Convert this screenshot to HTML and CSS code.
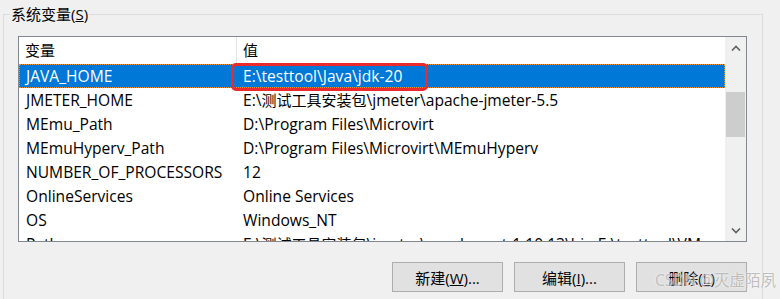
FILE: index.html
```html
<!DOCTYPE html>
<html lang="zh-CN">
<head>
  <meta charset="UTF-8">
  <title>系统变量</title>
  <link rel="stylesheet" href="styles.css">
</head>
<body>
  <fieldset class="group">
    <legend class="group-title">系统变量(<u>S</u>)</legend>
    <div class="group-body">
      <div class="listbox">
        <div class="list">
          <div class="row list-head">
            <div class="cell name">变量</div>
            <div class="cell value">值</div>
          </div>
          <div class="row selected">
            <div class="cell name">JAVA_HOME</div>
            <div class="cell value"><span class="mark"></span>E:\testtool\Java\jdk-20</div>
          </div>
          <div class="row">
            <div class="cell name">JMETER_HOME</div>
            <div class="cell value">E:\<span class="zh">测试工具安装包</span>\jmeter\apache-jmeter-5.5</div>
          </div>
          <div class="row">
            <div class="cell name">MEmu_Path</div>
            <div class="cell value">D:\Program Files\Microvirt</div>
          </div>
          <div class="row">
            <div class="cell name">MEmuHyperv_Path</div>
            <div class="cell value">D:\Program Files\Microvirt\MEmuHyperv</div>
          </div>
          <div class="row">
            <div class="cell name">NUMBER_OF_PROCESSORS</div>
            <div class="cell value">12</div>
          </div>
          <div class="row">
            <div class="cell name">OnlineServices</div>
            <div class="cell value">Online Services</div>
          </div>
          <div class="row">
            <div class="cell name">OS</div>
            <div class="cell value">Windows_NT</div>
          </div>
          <div class="row">
            <div class="cell name">Path</div>
            <div class="cell value">E:\<span class="zh">测试工具安装包</span>\jmeter\apache-ant-1.10.13\bin;E:\testtool\VMware</div>
          </div>
        </div>
        <div class="scrollbar">
          <div class="arrow">
            <svg width="10" height="6" viewBox="0 0 10 6"><path d="M1 5.5 L5 1.5 L9 5.5" fill="none" stroke="#606060" stroke-width="1.6"/></svg>
          </div>
          <div class="track"><div class="thumb"></div></div>
          <div class="arrow">
            <svg width="10" height="6" viewBox="0 0 10 6"><path d="M1 0.5 L5 4.5 L9 0.5" fill="none" stroke="#606060" stroke-width="1.6"/></svg>
          </div>
        </div>
      </div>

      <div class="buttons">
        <button class="btn">新建(<u>W</u>)...</button>
        <button class="btn">编辑(<u>I</u>)...</button>
        <button class="btn">删除(<u>L</u>)</button>
      </div>
    </div>
  </fieldset>
  <div class="watermark">CSDN @灭虚陌夙</div>
</body>
</html>
```

FILE: styles.css
```css
/* 系统变量面板 */
body {
  margin: 0;
  background-color: #f0f0f0;
  font-family: 'Open Sans', 'Noto Sans CJK SC', sans-serif;
  font-size: 15px;
  color: #000;
  overflow: hidden;
  position: relative;
  height: 299px;
}

.group {
  box-sizing: border-box;
  width: 760px;
  margin: 4px 0 0 3px;
  padding: 0;
  border: 1px solid #dcdcdc;
  min-width: 0;
}

.group-title {
  margin-left: 6px;
  padding: 0 1px;
  line-height: 20px;
}

.group-body {
  padding: 12px 15px 30px 14px;
}

.listbox {
  display: flex;
  height: 206px;
  box-sizing: border-box;
  border: 1px solid #828790;
  background-color: #fff;
}

.list {
  flex: 1;
  overflow: hidden;
  min-width: 0;
}

.row {
  display: grid;
  grid-template-columns: 218px 1fr;
  height: 24px;
  line-height: 24px;
  font-size: 15.6px;
  white-space: nowrap;
}

.zh {
  font-size: 15px;
}

.cell {
  overflow: hidden;
}

.cell.name {
  padding-left: 7px;
}

.cell.value {
  padding-left: 6px;
  position: relative;
  overflow: visible;
}

.list-head {
  height: 27px;
  line-height: 26px;
  font-size: 15px;
}

.list-head .cell.name {
  padding-left: 6px;
  border-right: 1px solid #e5e5e5;
}

.selected {
  background-color: #0078d7;
  color: #fff;
  outline: 1px dotted #e8953a;
  outline-offset: -1px;
}

/* 红框标注 */
.mark {
  position: absolute;
  left: -6px;
  top: -1px;
  width: 197px;
  height: 28px;
  box-sizing: border-box;
  border: 3px solid #ea2a2d;
  border-radius: 5px;
}

.scrollbar {
  width: 21px;
  background-color: #f0f0f0;
  display: flex;
  flex-direction: column;
}

.arrow {
  height: 21px;
  display: flex;
  align-items: center;
  justify-content: center;
}

.track {
  flex: 1;
  padding-top: 34px;
}

.thumb {
  margin: 0 1px;
  height: 45px;
  background-color: #cdcdcd;
}

.buttons {
  display: flex;
  justify-content: flex-end;
  gap: 11px;
  margin-top: 20px;
}

.btn {
  width: 111px;
  height: 30px;
  border: 1px solid #adadad;
  background-color: #e1e1e1;
  font-family: inherit;
  font-size: 15px;
  color: #000;
  padding: 0;
}

.watermark {
  position: absolute;
  right: 4px;
  bottom: 8px;
  font-size: 15.5px;
  color: rgba(170, 170, 170, 0.75);
  text-shadow: 0 0 2px #fff;
}
```
